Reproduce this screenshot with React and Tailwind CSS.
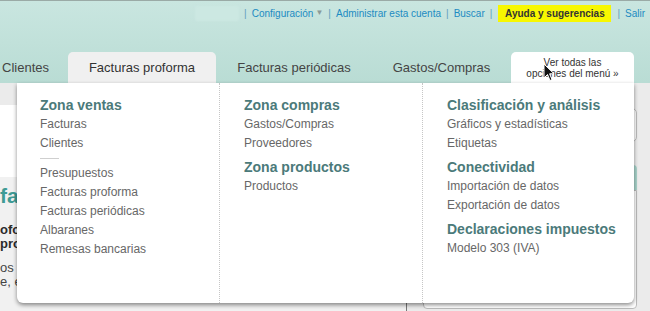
import React from "react";

const colVentas = [
  { type: "h", label: "Zona ventas" },
  { label: "Facturas" },
  { label: "Clientes" },
  { type: "sep" },
  { label: "Presupuestos" },
  { label: "Facturas proforma" },
  { label: "Facturas periódicas" },
  { label: "Albaranes" },
  { label: "Remesas bancarias" },
];

const colCompras = [
  { type: "h", label: "Zona compras" },
  { label: "Gastos/Compras" },
  { label: "Proveedores" },
  { type: "h", label: "Zona productos" },
  { label: "Productos" },
];

const colAnalisis = [
  { type: "h", label: "Clasificación y análisis" },
  { label: "Gráficos y estadísticas" },
  { label: "Etiquetas" },
  { type: "h", label: "Conectividad" },
  { label: "Importación de datos" },
  { label: "Exportación de datos" },
  { type: "h", label: "Declaraciones impuestos" },
  { label: "Modelo 303 (IVA)" },
];

const MenuColumn = ({ items, className }) => (
  <div className={className}>
    {items.map((item, i) => {
      if (item.type === "sep") {
        return <div key={i} className="my-[5px] h-px w-[19px] bg-[#cfcfcf]" />;
      }
      if (item.type === "h") {
        return (
          <div
            key={i}
            className={`text-[14px] font-bold leading-[19px] text-[#4b7a7a] ${i > 0 ? "mt-[5px]" : ""}`}
          >
            {item.label}
          </div>
        );
      }
      return (
        <div key={i} className="text-[12px] leading-[19px] text-[#676767]">
          {item.label}
        </div>
      );
    })}
  </div>
);

const Pipe = () => <span className="text-[#5f9fbd]">|</span>;

export default function App() {
  return (
    <div className="relative h-[311px] w-[650px] overflow-hidden bg-[#ebebeb] font-['Liberation_Sans',Arial,sans-serif]">
      {/* header */}
      <div className="flex h-[83px] flex-col border-t border-[#9aaaa6] bg-linear-to-b from-[#c9e6e0] to-[#b9dcd4]">
        <div className="flex h-[22px] items-center justify-end gap-[5px] pr-[5px] pt-[2px] text-[10px] text-[#1c8bc2]">
          <span className="h-[15px] w-[44px] rounded-[2px] bg-[#cce8e2] blur-[1px]" />
          <Pipe />
          <span>Configuración</span>
          <span className="-ml-[3px] text-[8px] text-[#8a9a98]">▼</span>
          <Pipe />
          <span>Administrar esta cuenta</span>
          <Pipe />
          <span>Buscar</span>
          <span className="mr-[1px]">
            <Pipe />
          </span>
          <span className="flex h-[17px] w-[113px] items-center justify-center bg-[#f7f700] font-bold text-[#333]">
            Ayuda y sugerencias
          </span>
          <span className="ml-[1px]">
            <Pipe />
          </span>
          <span>Salir</span>
        </div>
        <div className="mt-auto -ml-[17px] flex h-[31px] text-[13px] text-[#444]">
          <div className="flex w-[85px] items-center justify-center">Clientes</div>
          <div className="flex w-[148px] items-center justify-center rounded-t-[5px] bg-[#f0f0f0] text-[#333]">
            Facturas proforma
          </div>
          <div className="flex w-[156px] items-center justify-center">Facturas periódicas</div>
          <div className="flex w-[139px] items-center justify-center">Gastos/Compras</div>
          <div className="flex w-[123px] flex-col items-center justify-center rounded-t-[5px] bg-white text-[10px] leading-[11px] text-[#333]">
            <span>Ver todas las</span>
            <span>opciones del menú »</span>
          </div>
        </div>
      </div>

      {/* page body, mostly hidden behind the menu */}
      <div className="flex h-[228px]">
        <div className="flex w-[407px] flex-col border-r border-[#777]">
          <div className="mt-[22px] h-[72px] bg-white" />
          <div className="flex-1 bg-[#f1f1f1] pt-[6px]">
            <div className="w-[17px] overflow-hidden whitespace-nowrap">
              <div className="text-[21px] font-bold leading-[26px] text-[#3f9b95]">fa</div>
              <div className="mt-[14px] text-[13px] font-bold leading-[14px] text-[#2b2b2b]">
                <div>ofo</div>
                <div>pro</div>
              </div>
              <div className="mt-[10px] text-[13px] leading-[14px] text-[#444]">
                <div>os</div>
                <div>e, e</div>
              </div>
            </div>
          </div>
        </div>
        <div className="ml-[16px] flex w-[214px] flex-col">
          <div className="mt-[25px] h-[34px] rounded-[5px] border border-[#bbb] bg-white" />
          <div className="mt-[23px] h-[25px] rounded-t-[4px] bg-[#a9d4cb]" />
          <div className="h-[119px] rounded-b-[4px] border border-[#bbb] bg-white" />
        </div>
      </div>

      {/* open dropdown menu */}
      <div className="absolute left-[17px] top-[83px] flex h-[220px] w-[617px] rounded-b-[6px] bg-white shadow-[0_2px_4px_rgba(0,0,0,0.45)]">
        <MenuColumn
          items={colVentas}
          className="w-[203px] border-r border-dotted border-[#c6c6c6] pl-[23px] pt-[13px]"
        />
        <MenuColumn
          items={colCompras}
          className="w-[203px] border-r border-dotted border-[#c6c6c6] pl-[24px] pt-[13px]"
        />
        <MenuColumn items={colAnalisis} className="flex-1 pl-[24px] pt-[13px]" />
      </div>

      {/* mouse pointer */}
      <svg
        className="absolute left-[543px] top-[63px]"
        width="12"
        height="19"
        viewBox="0 0 12 19"
      >
        <path
          d="M1 1 L1 15 L4.5 11.5 L7 17.5 L9 16.6 L6.6 10.8 L11 10.8 Z"
          fill="#111"
          stroke="#fff"
          strokeWidth="1"
          strokeLinejoin="round"
        />
      </svg>
    </div>
  );
}
